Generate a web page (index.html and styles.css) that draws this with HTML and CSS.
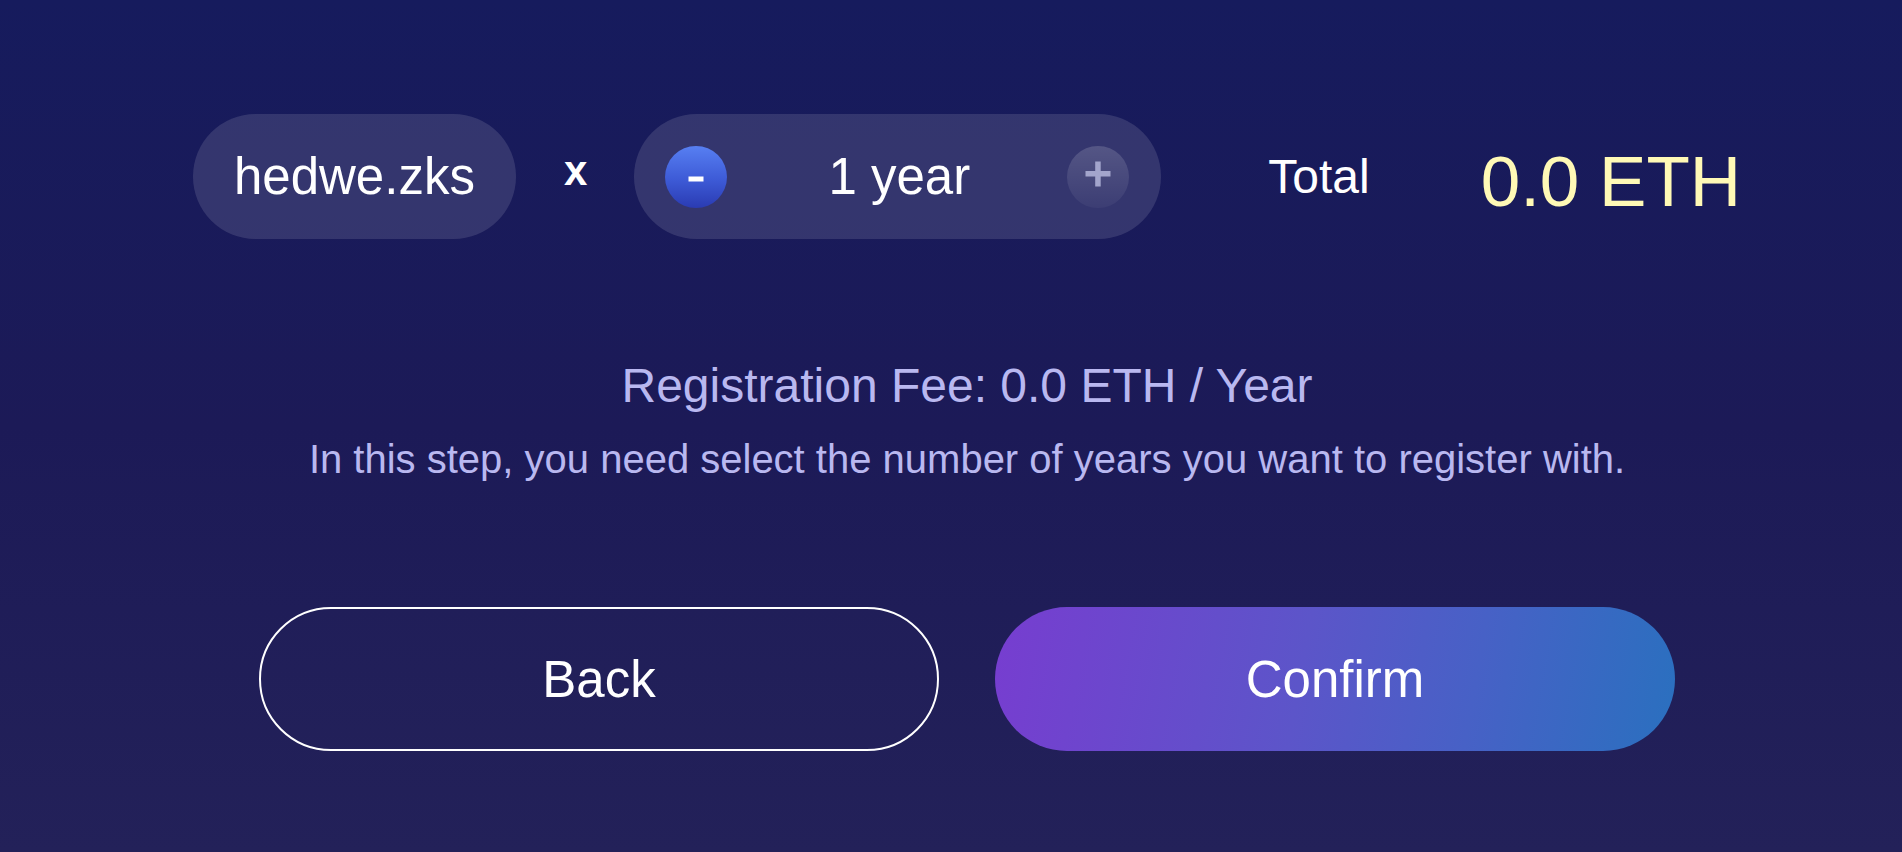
FILE: index.html
```html
<!DOCTYPE html>
<html lang="en">
<head>
<meta charset="utf-8">
<title>Register hedwe.zks</title>
<link rel="stylesheet" href="styles.css">
</head>
<body>
<main class="page">
  <div class="row">
    <div class="name-pill">hedwe.zks</div>
    <div class="times">x</div>
    <div class="stepper">
      <button class="step-btn minus" aria-label="decrease">
        <svg width="16" height="6" viewBox="0 0 16 6"><rect x="0.5" y="0.5" width="15" height="5" fill="#ffffff"/></svg>
      </button>
      <span class="years">1 year</span>
      <button class="step-btn plus" aria-label="increase">
        <svg width="26" height="26" viewBox="0 0 26 26"><rect x="0.5" y="10" width="25" height="5.5" fill="#a3a5cc"/><rect x="10.2" y="0.5" width="5.5" height="25" fill="#a3a5cc"/></svg>
      </button>
    </div>
    <div class="total-label">Total</div>
    <div class="total-value">0.0 ETH</div>
  </div>
  <p class="fee">Registration Fee: 0.0 ETH / Year</p>
  <p class="hint">In this step, you need select the number of years you want to register with.</p>
  <div class="actions">
    <button class="btn back">Back</button>
    <button class="btn confirm">Confirm</button>
  </div>
</main>
</body>
</html>
```

FILE: styles.css
```css
html, body {
  margin: 0;
  padding: 0;
}
body {
  width: 1902px;
  height: 852px;
  overflow: hidden;
  background: linear-gradient(180deg, #161b5d 0%, #1c1a57 50%, #232159 100%);
  font-family: "Liberation Sans", Arial, sans-serif;
  color: #ffffff;
}
.page {
  box-sizing: border-box;
  height: 852px;
  padding: 114px 0 0 32px;
}
.row {
  display: flex;
  align-items: center;
  justify-content: center;
  height: 125px;
}
.name-pill {
  height: 125px;
  box-sizing: border-box;
  padding: 0 41px;
  border-radius: 63px;
  background: rgba(255, 255, 255, 0.12);
  display: flex;
  align-items: center;
  font-size: 51px;
  line-height: 1;
}
.times {
  font-size: 42px;
  font-weight: bold;
  line-height: 1;
  margin: 0 47px 12px 48px;
}
.stepper {
  width: 527px;
  height: 125px;
  box-sizing: border-box;
  padding: 0 32px 0 31px;
  border-radius: 63px;
  background: rgba(255, 255, 255, 0.12);
  display: flex;
  align-items: center;
  justify-content: space-between;
}
.step-btn {
  width: 62px;
  height: 62px;
  border: 0;
  padding: 0;
  border-radius: 50%;
  display: flex;
  align-items: center;
  justify-content: center;
}
.step-btn.minus {
  background: linear-gradient(180deg, #577ff2 0%, #3d5ad6 55%, #2a3bb2 100%);
}
.step-btn.minus svg {
  margin-top: 5px;
}
.step-btn.plus {
  background: linear-gradient(180deg, rgba(255, 255, 255, 0.16) 0%, rgba(255, 255, 255, 0.04) 100%);
}
.step-btn.plus svg {
  margin-top: -6px;
}
.years {
  font-size: 51px;
  line-height: 1;
  margin-left: 4px;
}
.total-label {
  font-size: 48px;
  line-height: 1;
  margin-left: 107px;
}
.total-value {
  font-size: 71px;
  line-height: 1;
  color: #fff9b6;
  margin-left: 111px;
  padding-top: 9px;
}
.fee {
  margin: 118px 0 0;
  text-align: center;
  font-size: 48px;
  line-height: 58px;
  color: #b9b8f0;
}
.hint {
  margin: 20px 0 0;
  text-align: center;
  font-size: 40px;
  line-height: 48px;
  color: #b9b8f0;
}
.actions {
  display: flex;
  justify-content: center;
  gap: 56px;
  margin-top: 124px;
}
.btn {
  width: 680px;
  height: 144px;
  border-radius: 72px;
  font-family: "Liberation Sans", Arial, sans-serif;
  font-size: 51px;
  color: #ffffff;
  padding: 0;
}
.btn.back {
  background: rgba(255, 255, 255, 0.008);
  border: 2px solid #ffffff;
}
.btn.confirm {
  border: 0;
  background: linear-gradient(100deg, #773dd0 0%, #5c55c9 45%, #4761c6 70%, #2a70bf 100%);
}
```
